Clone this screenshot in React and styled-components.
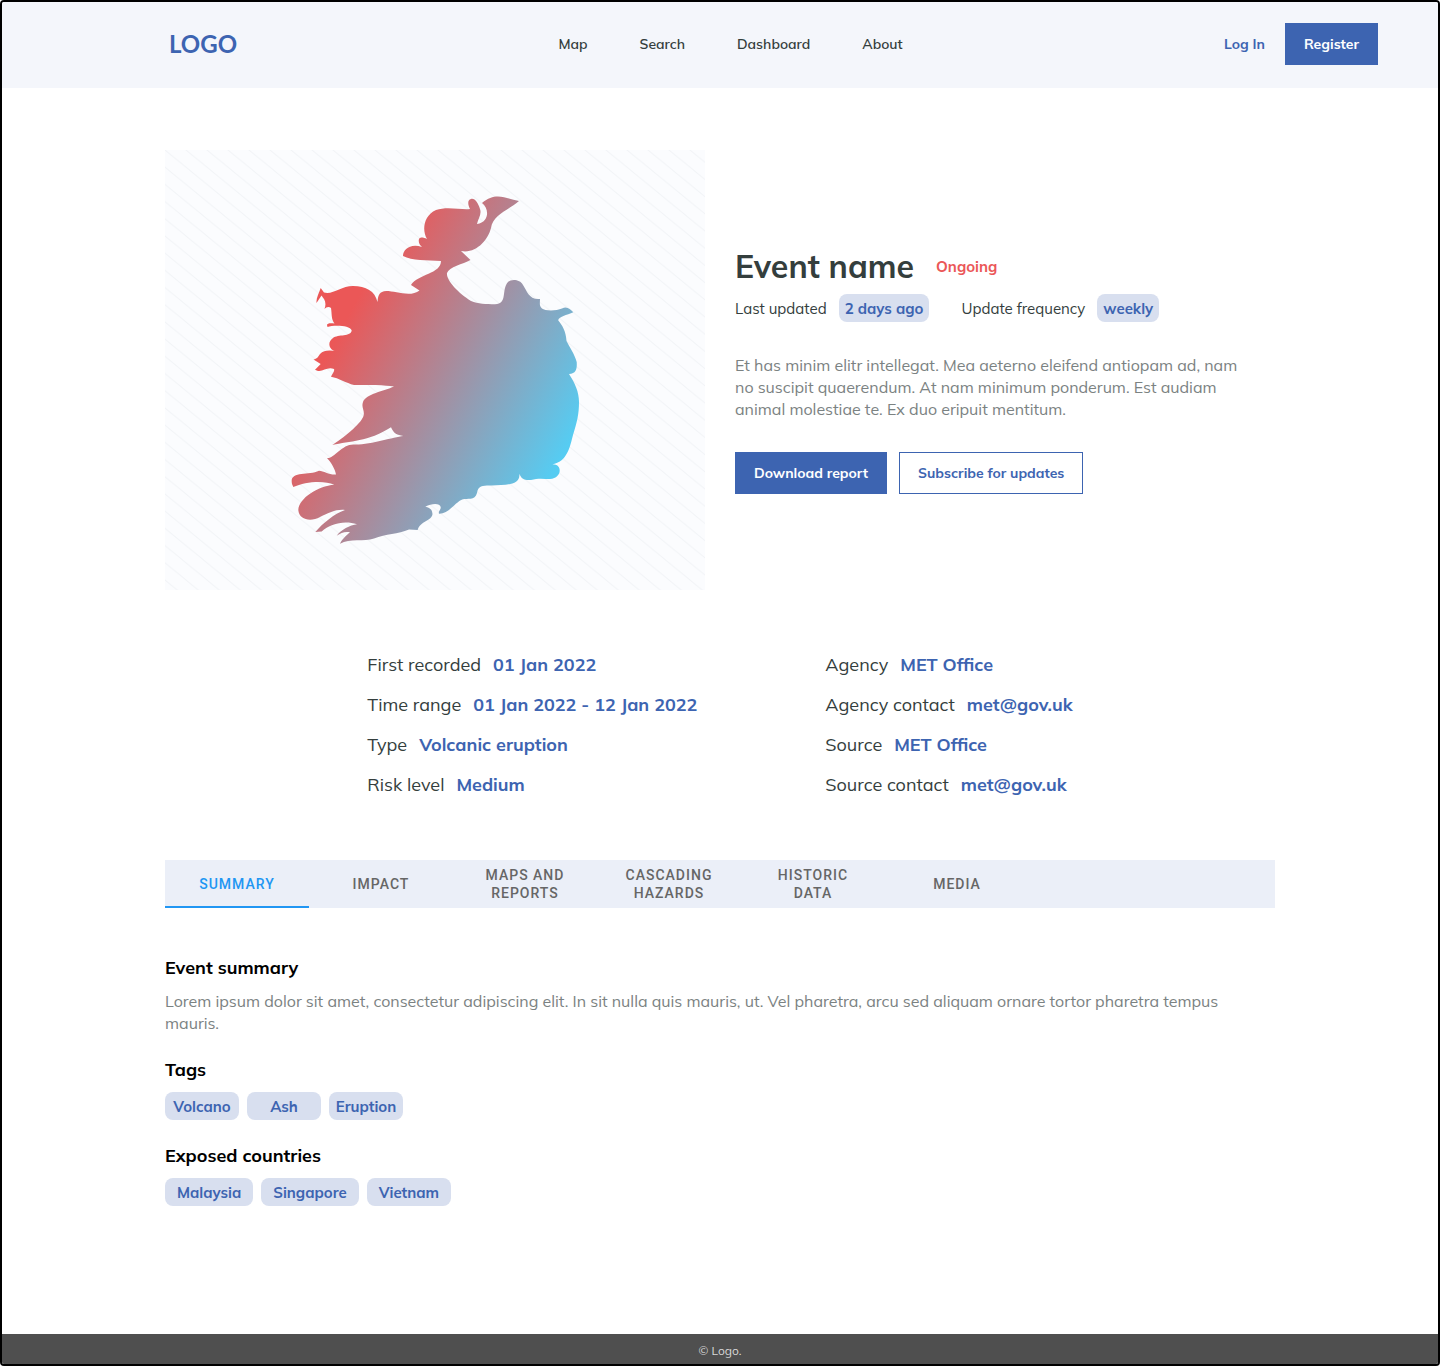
import { useState } from "react";
import styled, { createGlobalStyle } from "styled-components";

const navLinks = ["Map", "Search", "Dashboard", "About"];

const eventDetails = [
    { label: "First recorded", value: "01 Jan 2022" },
    { label: "Time range", value: "01 Jan 2022 - 12 Jan 2022" },
    { label: "Type", value: "Volcanic eruption" },
    { label: "Risk level", value: "Medium" },
];

const agencyDetails = [
    { label: "Agency", value: "MET Office" },
    { label: "Agency contact", value: "met@gov.uk" },
    { label: "Source", value: "MET Office" },
    { label: "Source contact", value: "met@gov.uk" },
];

const tabs = ["Summary", "Impact", "Maps and reports", "Cascading hazards", "Historic data", "Media"];
const tags = ["Volcano", "Ash", "Eruption"];
const countries = ["Malaysia", "Singapore", "Vietnam"];

const EventMap = function() {
    return (
        <MapSvg viewBox="165 150 540 440" role="img" aria-label="Map of the affected area">
            <defs>
                <pattern id="hatch" x="165" y="150" width="21" height="17.2" patternUnits="userSpaceOnUse">
                    <path d="M-21 -17.2L42 34.4M-21 0L21 34.4M0 -17.2L42 17.2" stroke="#F2F4F7" strokeWidth="1" />
                </pattern>
                <linearGradient id="heat" gradientUnits="userSpaceOnUse" x1="348" y1="316" x2="572" y2="437">
                    <stop offset="0" stopColor="#EB5757" />
                    <stop offset="1" stopColor="#56CCF2" />
                </linearGradient>
            </defs>
            <rect x="165" y="150" width="540" height="440" fill="#FBFCFE" />
            <rect x="165" y="150" width="540" height="440" fill="url(#hatch)" />
            <path
                fill="url(#heat)"
                d="M519 201C507 199 496 191 482 203C489 208 490 222 477 224C478 219 482 214 480 209C478 203 475 198 471 199
                C467 200 468 205 470 209C461 210 447 206 436 210C423 216 422 231 427 239C423 237 420 237 419 239
                C418 243 420 245 422 247C410 243 403 250 403 256C412 261 427 260 441 261C441 274 418 274 411 285L419.500 290.500
                C409 299 389 288 382 292C378 294 378 298 377.500 302C375 291 366 286 353 286C341 286 333 295 324 292.500
                L320.700 288C319 293 316 298 316.500 303L321.500 295.500C324 299 327 302 324.500 309C326 307 329 306 331 308
                C332 314 331 319 334.500 323.500C331 323 327 323 327 325L327.500 327C333 325 350 325 351.700 330.500
                C351 337 338 334 333 338C326 343 330 351 337 351.500C330 350 324 350 320 354C318 357 317 359 313.500 359.500
                L320.700 364L315 369.700C322 374 326 366 334 369C335 371 332 374 331 376.700C339 378 346 383 354 385
                C367 385 386 385 394 386.500C384 391 366 394 363 402C361 408 365 410 363.500 416C361 424 342 439 332.300 445
                C350 441 368 442 391 427.300C394 434 397 435 403.300 436C393 437 371 445 354 444.500C342 444 335 458 327 458.300
                C331 462 335 469 336 474.500C329 475 324 471 319 470.700C308 476 289 470 292 484L293.300 487
                C305 482 323 480 334.300 484.700C318 486 299 498 298.300 510C299 520 311 522 320 517C329 513 336 509 345 510
                C334 514 323 523 315.300 532L321.700 531.500C330 524 344 520 357 524.300C350 525 341 530 336.700 535.700
                C341 533 345 531 350 532.300C347 535 342 539 340 543.700C350 538 364 542 374 538.500C386 534 398 534 409 529.500L417.700 530
                C420 521 432 521 432.500 514C432 509 430 508 425.300 506.700C432 503 440 503 440.700 507C441 510 438 511 439 513.700
                C449 514 455 502 463 499.300C467 498 475 501 477 493C478 485 484 485.500 492 485.500C503 485 521 486 519.300 473.700
                C522 480 525 480 531 480C538 478 544 479 550 479C562 478 563 464 552.300 464.300C567 462 570 447 573 435
                C577 422 579 414 579 402C579 392 575 383 569 374C577 374 577 367 576.700 362C575 355 569 346 566.500 341
                C566 331 562 325 558.300 320.500C558 317 567 315 573.300 312.300C570 309 567 306 562 308.500
                C556 311 545 311 542 308.500C539 306 540 303 540 299C529 300 527 291 523 285C520 279 511 279 508 282
                C501 290 508 304 495 304.300C486 304 478 304 471 301C458 293 446 280 447 273C449 267 463 264 470.500 260L461 251
                C476 254 488 240 491 228C493 215 507 211 519 201Z"
            />
        </MapSvg>
    )
}

const DetailList = function({ items }) {
    return (
        <Details>
            {items.map(item => (
                <DetailRow key={item.label}>
                    <dt>{item.label}</dt>
                    <dd>{item.value}</dd>
                </DetailRow>
            ))}
        </Details>
    )
}

const App = function() {
    const [active, setActive] = useState("Summary");

    return (
        <Page>
            <GlobalStyle />
            <Header>
                <Logo href="#">LOGO</Logo>
                <Nav>
                    {navLinks.map(link => <a key={link} href="#">{link}</a>)}
                </Nav>
                <Account>
                    <a href="#">Log In</a>
                    <Button $primary>Register</Button>
                </Account>
            </Header>

            <Main>
                <Hero>
                    <EventMap />
                    <div>
                        <TitleRow>
                            <h1>Event name</h1>
                            <Status>Ongoing</Status>
                        </TitleRow>
                        <MetaRow>
                            <Meta>Last updated <Chip>2 days ago</Chip></Meta>
                            <Meta>Update frequency <Chip>weekly</Chip></Meta>
                        </MetaRow>
                        <Intro>
                            Et has minim elitr intellegat. Mea aeterno eleifend antiopam ad, nam no suscipit quaerendum. At nam minimum ponderum. Est audiam animal molestiae te. Ex duo eripuit mentitum.
                        </Intro>
                        <Actions>
                            <Button $primary>Download report</Button>
                            <Button>Subscribe for updates</Button>
                        </Actions>
                    </div>
                </Hero>

                <DetailColumns>
                    <DetailList items={eventDetails} />
                    <DetailList items={agencyDetails} />
                </DetailColumns>

                <TabBar role="tablist">
                    {tabs.map(tab => (
                        <Tab key={tab} role="tab" aria-selected={tab === active} $active={tab === active} onClick={() => setActive(tab)}>
                            {tab}
                        </Tab>
                    ))}
                </TabBar>

                <Section>
                    <h2>Event summary</h2>
                    <Text>
                        Lorem ipsum dolor sit amet, consectetur adipiscing elit. In sit nulla quis mauris, ut. Vel pharetra, arcu sed aliquam ornare tortor pharetra tempus mauris.
                    </Text>
                </Section>
                <Section>
                    <h2>Tags</h2>
                    <ChipRow>
                        {tags.map(tag => <Chip key={tag} $fixed>{tag}</Chip>)}
                    </ChipRow>
                </Section>
                <Section>
                    <h2>Exposed countries</h2>
                    <ChipRow>
                        {countries.map(country => <Chip key={country} $wide>{country}</Chip>)}
                    </ChipRow>
                </Section>
            </Main>

            <Footer>© Logo.</Footer>
        </Page>
    )
}

export default App;


const GlobalStyle = createGlobalStyle`
    * {
        box-sizing: border-box;
        margin: 0;
    }

    body {
        background: #FFFFFF;
        font-family: Mulish, "Open Sans", sans-serif;
        color: #343E3D;
    }

    a {
        color: inherit;
        text-decoration: none;
    }

    button {
        font-family: inherit;
        cursor: pointer;
    }
`

const Page = styled.div`
    min-height: 100vh;
    border: 2px solid #000000;
    border-radius: 4px;
    overflow: hidden;
    display: flex;
    flex-direction: column;
`

const Header = styled.header`
    height: 86px;
    padding: 0 60px 2px 167px;
    background: #F4F6FB;
    display: flex;
    justify-content: space-between;
    align-items: center;
`

const Logo = styled.a`
    font-family: Lato, sans-serif;
    font-size: 24px;
    font-weight: 700;
    line-height: 28px;
    color: #3D64B1;
`

const Nav = styled.nav`
    display: flex;
    gap: 52px;
    font-size: 14px;
    font-weight: 600;
`

const Account = styled.div`
    display: flex;
    align-items: center;
    gap: 20px;
    font-size: 14px;
    font-weight: 700;
    color: #3D64B1;
`

const Button = styled.button`
    height: 42px;
    padding: 0 18px;
    border: 1px solid #3D64B1;
    background: ${props => props.$primary ? "#3D64B1" : "#FFFFFF"};
    color: ${props => props.$primary ? "#FFFFFF" : "#3D64B1"};
    font-size: 14px;
    font-weight: 700;
`

const Main = styled.main`
    flex: 1;
    width: 100%;
    max-width: 1110px;
    margin: 0 auto;
    padding: 62px 0 104px;
`

const Hero = styled.section`
    display: grid;
    grid-template-columns: 1fr 1fr;
    gap: 30px;
    align-items: center;
`

const MapSvg = styled.svg`
    display: block;
    width: 100%;
`

const TitleRow = styled.div`
    display: flex;
    align-items: center;
    gap: 22px;

    & h1 {
        font-size: 32px;
        font-weight: 700;
        line-height: 40px;
    }
`

const Status = styled.span`
    font-size: 15px;
    font-weight: 700;
    color: #EB5757;
`

const MetaRow = styled.div`
    display: flex;
    gap: 32px;
    margin: 8px 0 32px;
`

const Meta = styled.div`
    display: flex;
    align-items: center;
    gap: 12px;
    font-size: 15px;
`

const Chip = styled.span`
    height: 28px;
    min-width: ${props => props.$fixed ? "74px" : "0"};
    padding: 0 ${props => props.$wide ? "12px" : "6px"};
    border-radius: 8px;
    background: #D8DFEF;
    color: #3D64B1;
    font-size: 15px;
    font-weight: 700;
    display: flex;
    justify-content: center;
    align-items: center;
`

const Text = styled.p`
    font-size: 16px;
    line-height: 22px;
    color: #7B8282;
`

const Intro = styled(Text)`
    max-width: 520px;
`

const Actions = styled.div`
    display: flex;
    gap: 12px;
    margin-top: 32px;
`

const DetailColumns = styled.section`
    display: flex;
    justify-content: center;
    gap: 128px;
    margin-top: 64px;
`

const Details = styled.dl`
    display: flex;
    flex-direction: column;
    gap: 18px;
`

const DetailRow = styled.div`
    display: flex;
    gap: 12px;
    font-size: 18px;
    line-height: 22px;

    & dd {
        font-weight: 700;
        color: #3D64B1;
    }
`

const TabBar = styled.div`
    display: flex;
    height: 48px;
    margin: 64px 0 48px;
    background: #EBEFF8;
`

const Tab = styled.button`
    width: 144px;
    padding: 2px 24px 0;
    border: none;
    border-bottom: 2px solid ${props => props.$active ? "#2196F3" : "transparent"};
    background: none;
    color: ${props => props.$active ? "#2196F3" : "#666666"};
    font-family: Roboto, sans-serif;
    font-size: 14px;
    font-weight: 500;
    line-height: 18px;
    letter-spacing: 1px;
    text-transform: uppercase;
`

const Section = styled.section`
    margin-bottom: 24px;

    & h2 {
        margin-bottom: 10px;
        font-size: 18px;
        font-weight: 700;
        line-height: 24px;
        color: #000000;
    }
`

const ChipRow = styled.div`
    display: flex;
    gap: 8px;
`

const Footer = styled.footer`
    height: 30px;
    padding-top: 2px;
    background: #4F4F4F;
    color: #D8D8D8;
    font-size: 12px;
    display: flex;
    justify-content: center;
    align-items: center;
`
